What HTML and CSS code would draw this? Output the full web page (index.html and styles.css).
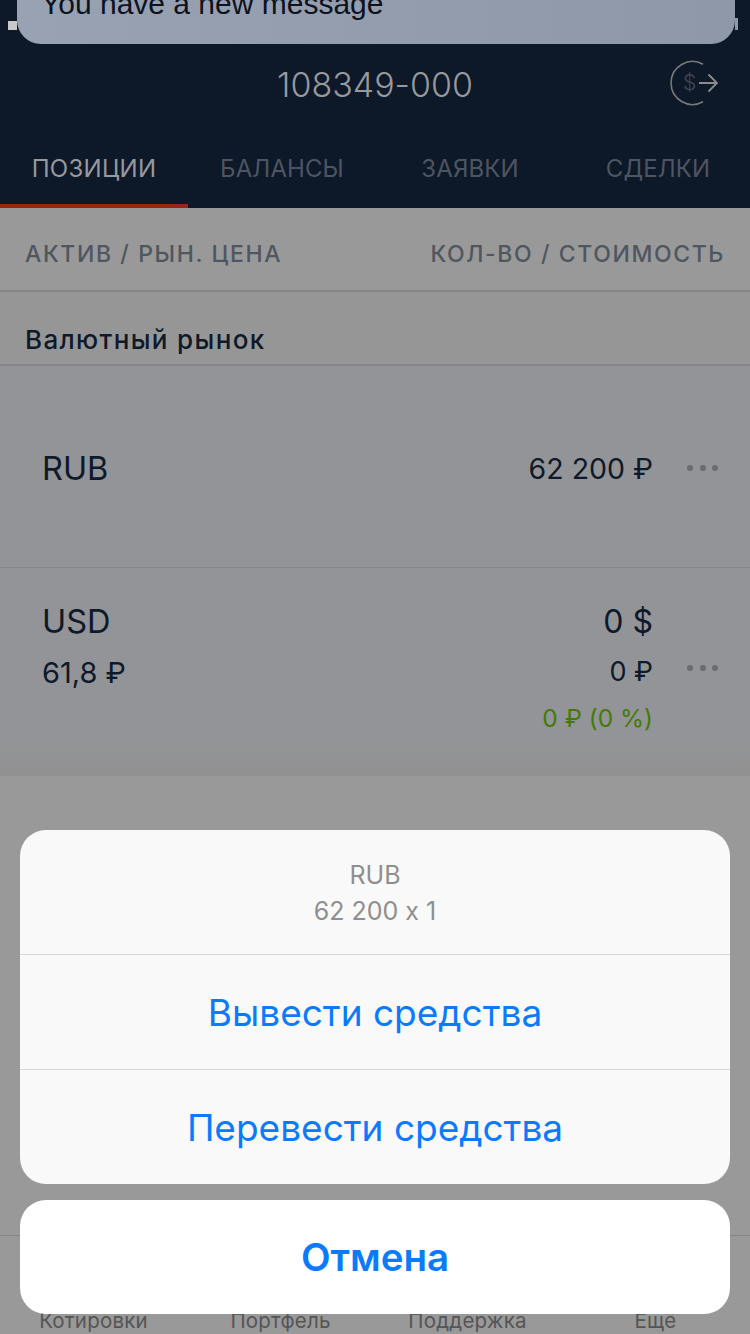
FILE: index.html
```html
<!DOCTYPE html>
<html lang="ru">
<head>
  <meta charset="UTF-8" />
  <meta name="viewport" content="width=device-width, initial-scale=1.0"/>
  <title>Портфель</title>
  <link rel="stylesheet" href="styles.css">
</head>
<body>
  <div class="screen">
    <header class="top">
      <div class="account">
        <span>108349-000</span>
        <svg class="account-icon" width="48" height="46" viewBox="0 0 48 46" fill="none">
          <path d="M33 4.2A21.5 21.5 0 1 0 33 41.8" stroke="#77797c" stroke-width="1.6"/>
          <path d="M29 23H47M38.5 14.5L47 23L38.5 31.5" stroke="#8b8c8e" stroke-width="1.8"/>
          <text x="13" y="30" class="account-dollar">$</text>
        </svg>
      </div>
      <nav class="tabs">
        <a class="tab tab-active">ПОЗИЦИИ</a>
        <a class="tab">БАЛАНСЫ</a>
        <a class="tab">ЗАЯВКИ</a>
        <a class="tab">СДЕЛКИ</a>
      </nav>
    </header>

    <div class="list-head">
      <span>АКТИВ / РЫН. ЦЕНА</span>
      <span>КОЛ-ВО / СТОИМОСТЬ</span>
    </div>
    <div class="group-title">Валютный рынок</div>

    <section class="row row-rub">
      <div class="name">RUB</div>
      <div class="values">
        <div class="value">62 200 ₽</div>
      </div>
      <div class="dots"><i></i><i></i><i></i></div>
    </section>

    <section class="row row-usd">
      <div class="names">
        <div class="name">USD</div>
        <div class="price">61,8 ₽</div>
      </div>
      <div class="values">
        <div class="value value-main">0 $</div>
        <div class="value value-sub">0 ₽</div>
        <div class="gain">0 ₽ (0 %)</div>
      </div>
      <div class="dots"><i></i><i></i><i></i></div>
    </section>

    <div class="spacer"></div>

    <footer class="bottom-bar">
      <span>Котировки</span>
      <span>Портфель</span>
      <span>Поддержка</span>
      <span>Ещё</span>
    </footer>
  </div>

  <div class="banner">You have a new message</div>

  <div class="sheet">
    <div class="sheet-group">
      <div class="sheet-title">
        <div>RUB</div>
        <div>62 200 x 1</div>
      </div>
      <button class="sheet-btn">Вывести средства</button>
      <button class="sheet-btn">Перевести средства</button>
    </div>
    <button class="sheet-cancel">Отмена</button>
  </div>
</body>
</html>
```

FILE: styles.css
```css
* {
  box-sizing: border-box;
}

body {
  margin: 0;
  width: 750px;
  height: 1334px;
  overflow: hidden;
  position: relative;
  font-family: Inter, 'Noto Sans', sans-serif;
  font-feature-settings: "calt" 0;
  background: #999999;
}

.screen {
  height: 1334px;
  display: flex;
  flex-direction: column;
}

.top {
  height: 208px;
  background: #0d1829;
  display: flex;
  flex-direction: column;
  justify-content: flex-end;
}

.account {
  height: 64px;
  position: relative;
  display: flex;
  justify-content: center;
  align-items: center;
  color: #98999c;
  font-size: 34px;
  font-weight: 300;
}

.account-icon {
  position: absolute;
  right: 32px;
  top: 8px;
}

.account-dollar {
  font-size: 21px;
  fill: #3f4856;
}

.tabs {
  height: 92px;
  display: grid;
  grid-template-columns: repeat(4, 188px);
}

.tab {
  display: flex;
  justify-content: center;
  align-items: center;
  height: 92px;
  padding-top: 12px;
  font-size: 24px;
  color: #4d5561;
  letter-spacing: 0.1px;
}

.tab-active {
  padding-top: 16px;
  color: #98999c;
  letter-spacing: 0.3px;
  border-bottom: 4px solid #9c2318;
}

.list-head {
  height: 84px;
  padding: 10px 25px 0 25px;
  display: flex;
  justify-content: space-between;
  align-items: center;
  background: #999999;
  border-bottom: 2px solid #858688;
  color: #50565f;
  font-size: 23px;
  font-weight: 500;
  letter-spacing: 1.6px;
}

.group-title {
  height: 74px;
  padding: 0 25px 9px;
  display: flex;
  align-items: flex-end;
  background: #969696;
  border-bottom: 2px solid #858688;
  color: #0e1929;
  font-size: 26px;
  font-weight: 500;
  letter-spacing: 1.35px;
}

.row {
  background: #939497;
  display: flex;
  padding: 0 32px 0 42px;
  color: #0e1929;
}

.row-rub {
  height: 202px;
  padding-top: 4px;
  border-bottom: 1px solid #858688;
  align-items: center;
}

.row-usd {
  height: 208px;
  padding-top: 29px;
  background: linear-gradient(#939497 85%, #919191);
}

.names {
  display: flex;
  flex-direction: column;
}

.name {
  font-size: 32.5px;
  line-height: 50px;
}

.price {
  font-size: 29px;
  line-height: 52px;
}

.values {
  margin-left: auto;
  display: flex;
  flex-direction: column;
  align-items: flex-end;
}

.value {
  font-size: 28.5px;
  line-height: 50px;
}

.value-main {
  font-size: 32px;
}

.value-sub {
  font-size: 27px;
}

.gain {
  font-size: 24.5px;
  line-height: 42px;
  color: #457a08;
}

.dots {
  width: 31px;
  margin-left: 34px;
  display: flex;
  justify-content: space-between;
  align-items: center;
  height: 6px;
  align-self: center;
}

.row-rub .dots {
  margin-top: -2px;
}

.row-usd .dots {
  margin-top: -38px;
}

.dots i {
  width: 6px;
  height: 6px;
  border-radius: 50%;
  background: #696c72;
}

.spacer {
  height: 459px;
}

.bottom-bar {
  flex: 1;
  border-top: 1px solid #858585;
  display: grid;
  grid-template-columns: 187px 187px 187px 189px;
  align-items: end;
  justify-items: center;
  color: #555;
  font-size: 20.5px;
  letter-spacing: 0.2px;
  padding-bottom: 1px;
}

.banner {
  position: absolute;
  top: -30px;
  left: 17px;
  width: 718px;
  height: 74px;
  padding: 17px 0 0 24px;
  border-radius: 0 0 24px 24px;
  background: linear-gradient(90deg, #98a2b2, #8e98a9);
  color: #0b1220;
  font-size: 30px;
  font-family: 'Liberation Sans', sans-serif;
}

/* status bar bits that stick out from behind the banner */
.banner::before {
  content: "";
  position: absolute;
  left: -9px;
  top: 51px;
  width: 9px;
  height: 9px;
  background: #c8c8c8;
}

.banner::after {
  content: "";
  position: absolute;
  right: -3px;
  top: 48px;
  width: 3px;
  height: 12px;
  background: #8e98a9;
}

.sheet {
  position: absolute;
  left: 20px;
  top: 830px;
  width: 710px;
  display: flex;
  flex-direction: column;
  gap: 16px;
}

.sheet-group {
  background: #f9f9f9;
  border-radius: 26px;
  overflow: hidden;
}

.sheet-title {
  height: 124px;
  padding-top: 27px;
  text-align: center;
  color: #8f8f8f;
  font-size: 25px;
  line-height: 36px;
}

.sheet-btn {
  display: block;
  width: 100%;
  height: 115px;
  border: none;
  border-top: 1px solid #d6d6d6;
  background: none;
  color: #0a7aff;
  font-family: inherit;
  font-feature-settings: inherit;
  font-size: 37px;
  padding: 0;
}

.sheet-cancel {
  height: 114px;
  border: none;
  border-radius: 26px;
  background: #fff;
  color: #0a7aff;
  font-family: inherit;
  font-size: 38.5px;
  font-weight: 600;
  padding: 0;
}
```
